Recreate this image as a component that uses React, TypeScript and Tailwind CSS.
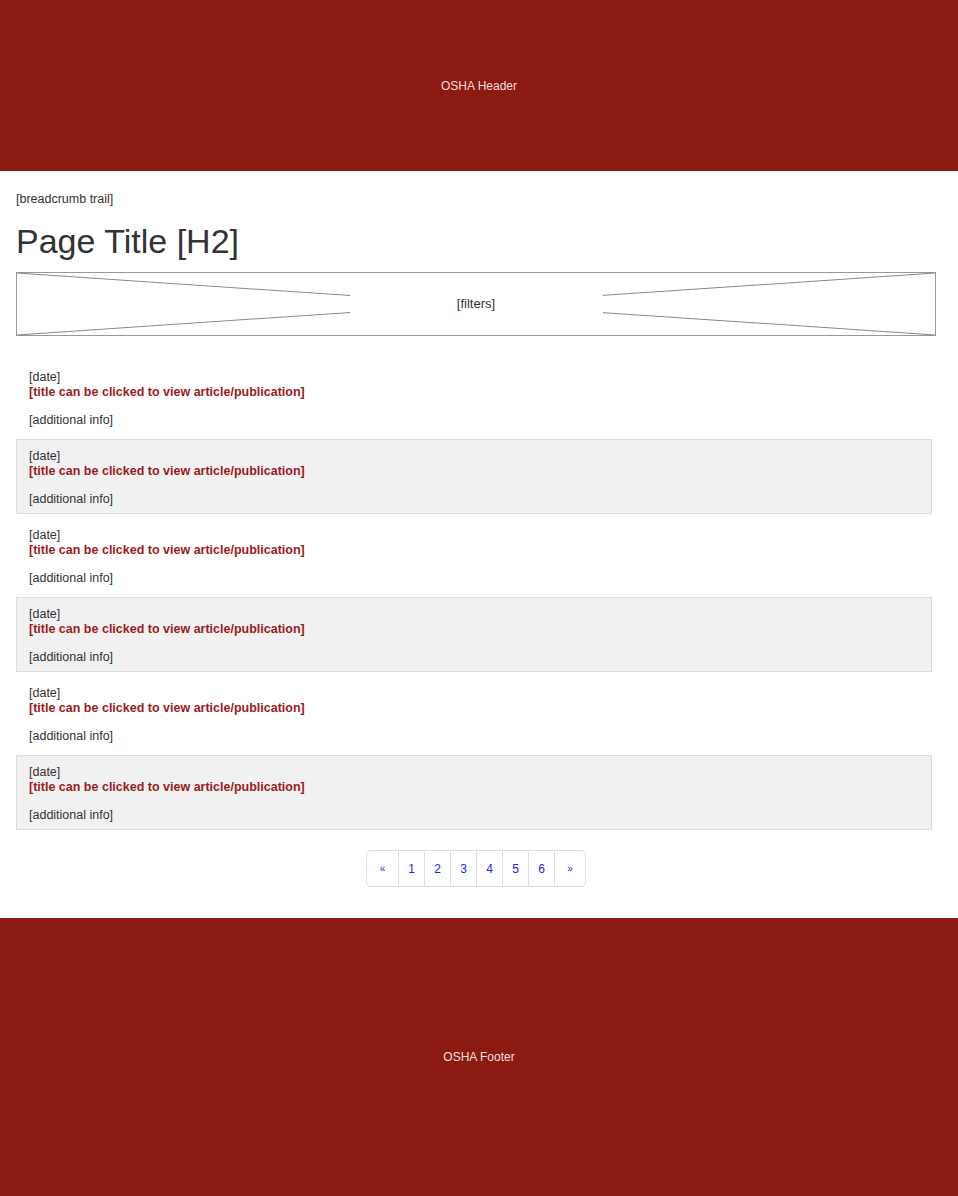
const items = [false, true, false, true, false, true];
const pages = ['«', '1', '2', '3', '4', '5', '6', '»'];

const Item = ({ shaded }: { shaded: boolean }) => (
  <div
    className={
      'h-[75px] px-3 py-2 text-[12.5px] text-[#333] border ' +
      (shaded ? 'bg-[#f1f1f1] border-[#dcdcdc]' : 'border-transparent')
    }
  >
    <div className="leading-4">[date]</div>
    <a href="#" className="block leading-[15px] font-bold text-[#9b1c1c]">
      [title can be clicked to view article/publication]
    </a>
    <div className="leading-4 mt-3">[additional info]</div>
  </div>
);

export default function App() {
  return (
    <div className="font-['Liberation_Sans',Arial,sans-serif] bg-white">
      <header className="h-[171px] bg-[#8b1a12] flex items-center justify-center text-[12px] text-[#f2dede]">
        OSHA Header
      </header>

      <main className="pl-4 pr-[22px] pt-[21px] pb-[31px]">
        <div className="text-[12.5px] leading-[14px] text-[#333]">[breadcrumb trail]</div>
        <h2 className="mt-[15px] text-[34px] leading-[40px] text-[#333]">Page Title [H2]</h2>

        <div className="relative mt-[11px] h-[64px] border border-[#999]">
          <svg className="absolute inset-0 w-full h-full" viewBox="0 0 100 100" preserveAspectRatio="none">
            <line x1="0" y1="0" x2="100" y2="100" stroke="#888" strokeWidth="1" vectorEffect="non-scaling-stroke" />
            <line x1="100" y1="0" x2="0" y2="100" stroke="#888" strokeWidth="1" vectorEffect="non-scaling-stroke" />
          </svg>
          <div className="absolute inset-0 flex items-center justify-center">
            <div className="w-[253px] h-[19px] bg-white flex items-center justify-center text-[13px] text-[#333]">
              [filters]
            </div>
          </div>
        </div>

        <div className="mt-[24px] mr-1 flex flex-col gap-1">
          {items.map((shaded, i) => (
            <Item key={i} shaded={shaded} />
          ))}
        </div>

        <div className="mt-[20px] flex justify-center">
          <div className="flex h-[37px] border border-[#ddd] rounded-[5px] text-[12px] text-[#2222ee] overflow-hidden">
            {pages.map((p, i) => (
              <a
                key={i}
                href="#"
                className={
                  'flex items-center justify-center ' +
                  (i > 0 ? 'border-l border-[#ddd] ' : '') +
                  (i === 0 ? 'w-[31px] text-[10px]' : i === pages.length - 1 ? 'w-[31px] text-[10px]' : 'w-[26px]')
                }
              >
                {p}
              </a>
            ))}
          </div>
        </div>
      </main>

      <footer className="h-[278px] bg-[#8b1a12] flex items-center justify-center text-[12px] text-[#f2dede]">
        OSHA Footer
      </footer>
    </div>
  );
}
